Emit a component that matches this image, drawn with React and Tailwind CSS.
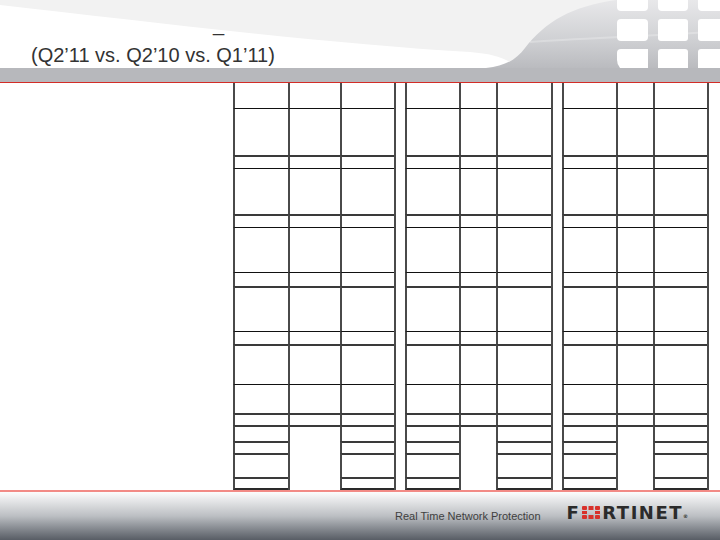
import React from 'react'

const thin = 'border-t border-t-[#111]'
const thick = 'border-t-2 border-t-[#3a3a3a]'

// top border of each of the 16 rows
const rowTops = ['', thin, thick, thin, thick, thin, thin, thick, thin, thick, thin, thick, thick, thick, thick, thick]

const Cell = ({ r, merged }) => (
    <div
        className={`border-l-2 border-l-[#4a4a4a] ${rowTops[r]} ${merged ? 'row-span-4' : ''} ${r === 15 && !merged ? 'border-b-2 border-b-[#2a2a2a]' : ''}`}
    />
)

const Group = ({ cols }) => {
    const cells = []
    for (let r = 0; r < 16; r++) {
        if (r < 12) {
            cells.push(<Cell key={`${r}a`} r={r} />, <Cell key={`${r}b`} r={r} />, <Cell key={`${r}c`} r={r} />)
        } else if (r === 12) {
            cells.push(<Cell key={`${r}a`} r={r} />, <Cell key={`${r}b`} r={r} merged />, <Cell key={`${r}c`} r={r} />)
        } else {
            cells.push(<Cell key={`${r}a`} r={r} />, <Cell key={`${r}c`} r={r} />)
        }
    }
    return (
        <div className={`grid ${cols} grid-rows-[25px_47px_13px_46px_13px_45px_14px_45px_13px_40px_29px_12px_16px_12px_24px_13px] border-r-2 border-r-[#4a4a4a] h-full`}>
            {cells}
        </div>
    )
}

const HeaderArt = () => (
    <svg className="absolute inset-0" width="720" height="68" viewBox="0 0 720 68">
        <defs>
            <linearGradient id="hdr" x1="0" y1="0" x2="0" y2="1">
                <stop offset="0" stopColor="#e8e8ea" />
                <stop offset="0.55" stopColor="#d1d2d5" />
                <stop offset="1" stopColor="#babbbf" />
            </linearGradient>
        </defs>
        <path d="M0 0 H720 V68 H520 C505 58 495 54 470 52 C330 44 150 22 0 5 Z" fill="#f2f2f2" />
        <path d="M486 68 C505 66 516 60 525 48 C545 22 572 6 616 0 H720 V68 Z" fill="url(#hdr)" />
        <path d="M530 42 C580 38 660 36 720 31" stroke="#ffffff" strokeOpacity="0.25" strokeWidth="2" fill="none" />
        <rect x="617" y="-6" width="31" height="17" rx="4" fill="#fff" />
        <rect x="658" y="-6" width="30" height="17" rx="4" fill="#fff" />
        <rect x="698" y="-6" width="30" height="17" rx="4" fill="#fff" />
        <rect x="617" y="19" width="31" height="22" rx="4" fill="#fff" />
        <rect x="658" y="19" width="30" height="22" rx="3" fill="#fff" />
        <rect x="698" y="19" width="30" height="22" rx="3" fill="#fff" />
        <path d="M621 49 H648 V72 H629 A12 12 0 0 1 617 60 V53 A4 4 0 0 1 621 49 Z" fill="#fff" />
        <rect x="658" y="49" width="30" height="24" rx="3" fill="#fff" />
        <rect x="698" y="49" width="30" height="24" rx="3" fill="#fff" />
    </svg>
)

const RedO = () => (
    <svg width="18" height="13" viewBox="0 0 18 13" className="mx-[2px]">
        <g fill="#d8312b">
            <rect x="0" y="0" width="5" height="4" rx="1" />
            <rect x="6.5" y="0" width="5" height="4" />
            <rect x="13" y="0" width="5" height="4" rx="1" />
            <rect x="0" y="5" width="5" height="3" />
            <rect x="13" y="5" width="5" height="3" />
            <rect x="0" y="9" width="5" height="4" rx="1" />
            <rect x="6.5" y="9" width="5" height="4" />
            <rect x="13" y="9" width="5" height="4" rx="1" />
        </g>
    </svg>
)

export default function App() {
    return (
        <div className="w-[720px] h-[540px] bg-white overflow-hidden flex flex-col font-['Liberation_Sans',Arial,sans-serif]">
            <div className="relative h-[68px] shrink-0">
                <HeaderArt />
                <div className="relative pl-[31px] pt-[13px] text-[20px] leading-[23px] text-[#333]">
                    <div className="pl-[182px]">_</div>
                    <div className="mt-[8px]">(Q2’11 vs. Q2’10 vs. Q1’11)</div>
                </div>
            </div>
            <div className="h-[14px] shrink-0 bg-[#b7b8bc]" />
            <div className="h-px shrink-0 bg-[#d32c26]" />

            <div className="flex h-[407px] shrink-0">
                <div className="w-[233px]" />
                <Group cols="grid-cols-[55px_52px_54px]" />
                <div className="w-[9px]" />
                <Group cols="grid-cols-[54px_37px_55px]" />
                <div className="w-[9px]" />
                <Group cols="grid-cols-[54px_37px_54px]" />
            </div>

            <div className="h-[50px] shrink-0 border-t-2 border-t-[#f28b86] bg-linear-to-b from-[#fdfdfd] via-[#bcbfc3] to-[#585d65] flex items-center pl-[395px]">
                <span className="text-[11px] text-[#404040] whitespace-nowrap">Real Time Network Protection</span>
                <div className="ml-[26px] mb-[7px] flex items-center font-['DejaVu_Sans',sans-serif] font-bold text-[18px] leading-[13px] text-[#2b2b2b] tracking-[1.5px]">
                    <span>F</span>
                    <RedO />
                    <span>RTINET</span>
                    <span className="text-[5px] leading-none self-end tracking-normal">®</span>
                </div>
            </div>
        </div>
    )
}
